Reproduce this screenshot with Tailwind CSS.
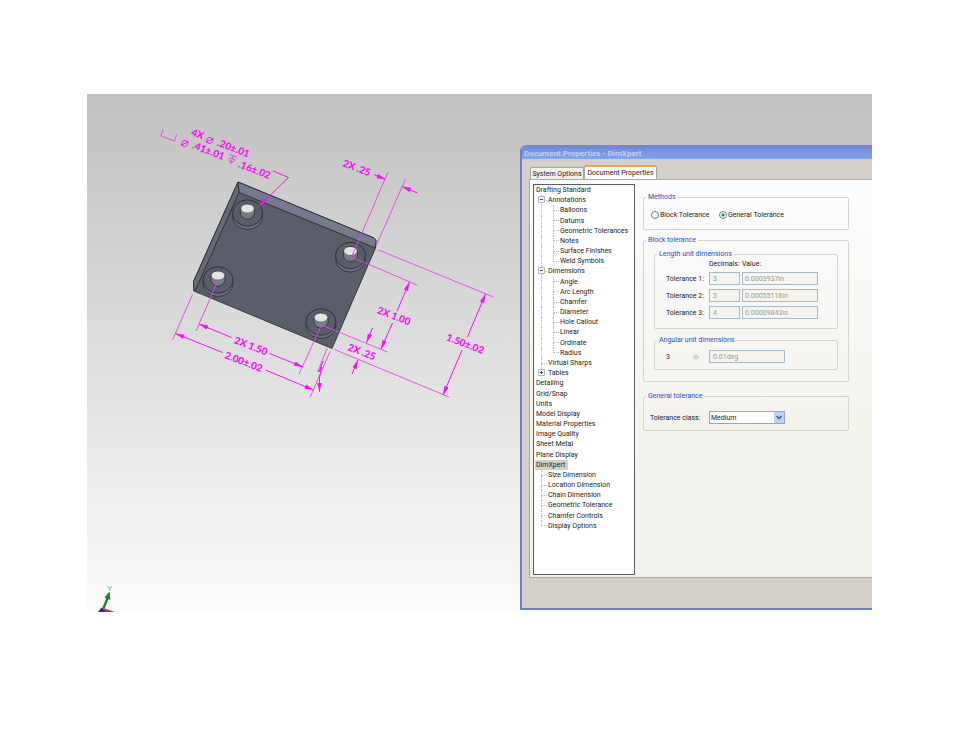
<!DOCTYPE html>
<html lang="en">
<head>
    <meta charset="UTF-8">
    <meta name="viewport" content="width=device-width, initial-scale=1.0">
    <title>Document Properties - DimXpert</title>
    <script src="https://cdn.jsdelivr.net/npm/@tailwindcss/browser@4"></script>
</head>
<body class="bg-white pt-[94px] pl-[87px] pr-[88px] pb-16 font-['Roboto',sans-serif] text-[7px] leading-[8px] text-[#222]">
    <main class="flex items-start overflow-hidden bg-linear-to-b from-[#c1c1c1] via-[#dedede] to-[#fcfcfc]">

        <!-- Model view -->
        <svg class="min-w-0 flex-1" viewBox="87 94 433 518" role="img" aria-label="Plate with dimensions">
            <defs>
                <marker id="arrow" viewBox="0 0 9 5" refX="9" refY="2.5" markerWidth="9" markerHeight="5" markerUnits="userSpaceOnUse" orient="auto-start-reverse">
                    <path d="M0 0.2 L9 2.5 L0 4.8 Z" fill="#f312f3"/>
                </marker>
                <g id="hole">
                    <ellipse cx="0" cy="3.5" rx="15" ry="13" fill="#6a6e7c" stroke="#2c2e36" stroke-width="0.8"/>
                    <ellipse cx="0" cy="0" rx="15" ry="13.2" fill="#5a5e6a" stroke="#2c2e36" stroke-width="0.9"/>
                    <ellipse cx="0" cy="-1.4" rx="7.3" ry="7.6" fill="#777a87" stroke="#2c2e36" stroke-width="0.8"/>
                    <ellipse cx="0" cy="-4.6" rx="6.4" ry="4" fill="#e4e4e0"/>
                </g>
            </defs>

            <!-- Plate -->
            <g stroke="#2c2e36" stroke-width="0.9" stroke-linejoin="round">
                <path d="M238 182 L374 238 L376 240 L375.500 248 L332 348.500 L194 291 L193.500 281.500 Z" fill="#5a5e6a"/>
                <path d="M238 182 L374 238 L376 240 L375.500 248 L239 192.500 Z" fill="#767a8d"/>
                <path d="M238 182 L239 192.500 L195.500 290 L194 291 L193.500 281.500 Z" fill="#666a78"/>
            </g>
            <use href="#hole" x="247.500" y="213"/>
            <use href="#hole" x="350.500" y="255.500"/>
            <use href="#hole" x="218" y="280"/>
            <use href="#hole" x="321" y="322"/>

            <!-- Extension lines -->
            <g fill="none" stroke="#f03cf0" stroke-width="0.9">
                <path d="M163 129 L161 136 L174.500 141 L176.500 134.500"/>
                <path d="M388 172 L351.500 257 L417 285"/>
                <path d="M405.500 179 L376.500 245"/>
                <path d="M378.500 250 L493.500 297"/>
                <path d="M387.500 352 L321.500 325 L299 374"/>
                <path d="M334.500 349.500 L449 397"/>
                <path d="M192.500 294.500 L172.500 340"/>
                <path d="M217.500 281.500 L196 331"/>
                <path d="M330 351.500 L310 397.500"/>
                <path d="M327 348.500 L317.500 372"/>
            </g>

            <!-- Dimension lines -->
            <g fill="none" stroke="#f312f3" stroke-width="1">
                <path marker-end="url(#arrow)" d="M273 171 L288.500 177.500 L259 206"/>
                <path marker-end="url(#arrow)" d="M374 174.500 L385.500 179.500"/>
                <path marker-end="url(#arrow)" d="M417.500 193 L402 186.500"/>
                <path marker-end="url(#arrow)" d="M397 311 L409.500 282"/>
                <path marker-end="url(#arrow)" d="M392.500 323 L381 349"/>
                <path marker-end="url(#arrow)" d="M372.500 328 L366.500 342.500"/>
                <path marker-end="url(#arrow)" d="M352 374 L358 360"/>
                <path marker-end="url(#arrow)" d="M467.500 337 L485.500 294"/>
                <path marker-end="url(#arrow)" d="M462 350 L443 395"/>
                <path marker-end="url(#arrow)" d="M231.500 337.500 L199 324"/>
                <path marker-end="url(#arrow)" d="M269.500 353.500 L303 367"/>
                <path marker-end="url(#arrow)" d="M222.500 352.500 L175.500 333.500"/>
                <path marker-end="url(#arrow)" d="M265.500 370 L313.500 390"/>
                <path marker-end="url(#arrow)" d="M323 361 L319 372 L321.500 367 L319.500 378 L319.500 392"/>
            </g>

            <!-- Depth symbol -->
            <g transform="translate(232 159.500) rotate(20)" fill="none" stroke="#f03cf0" stroke-width="0.9">
                <path d="M-4 -4 H4 M0 -4 V4 M-3 0 L0 4 L3 0 M-3 -1 H3"/>
            </g>

            <!-- Dimension values -->
            <g class="font-['Lato',sans-serif] text-[10px] font-black" fill="#f312f3">
                <text transform="translate(190.500 135) rotate(21)">4X</text>
                <text transform="translate(205 141.500) rotate(21)" class="font-['DejaVu_Sans',sans-serif] text-[13px] font-extralight">⌀</text>
                <text transform="translate(216.500 145.500) rotate(21)">.20±.01</text>
                <text transform="translate(180 144.500) rotate(21)" class="font-['DejaVu_Sans',sans-serif] text-[13px] font-extralight">⌀</text>
                <text transform="translate(191.500 148) rotate(21)">.41±.01</text>
                <text transform="translate(237.500 167) rotate(21)">.16±.02</text>
                <text transform="translate(342 166) rotate(21)">2X .25</text>
                <text transform="translate(376.500 313) rotate(21)">2X 1.00</text>
                <text transform="translate(347 350) rotate(21)">2X .25</text>
                <text transform="translate(445.500 340) rotate(21)">1.50±.02</text>
                <text transform="translate(233.500 343) rotate(21)">2X 1.50</text>
                <text transform="translate(224 358) rotate(21)">2.00±.02</text>
            </g>

            <!-- Axis triad -->
            <path d="M102 612 L108 597" stroke="#2c7a34" stroke-width="2.500"/>
            <path d="M109.500 591.500 L110.500 600 L104.500 597.500 Z" fill="#2c7a34"/>
            <path d="M103 608 L115 612 H102 Z" fill="#d0303a"/>
            <path d="M98 612 L101.500 607.500 L105 612 Z" fill="#2326b8"/>
            <text x="107" y="591" class="font-['Liberation_Sans',sans-serif] text-[8px]" fill="#6aa56c">Y</text>
        </svg>

        <!-- Dialog -->
        <section class="mt-[51px] mb-[3px] w-[352px] shrink-0 overflow-hidden rounded-tl-md border-b-2 border-l-2 border-[#6f80d3] bg-[#d4d0c8]">
            <h1 class="h-[14px] bg-linear-to-b from-[#6d86d8] via-[#7894e2] to-[#85a6ee] pt-[5px] pl-[2px] text-[8px] font-bold text-[#c3cff0]">Document Properties - DimXpert</h1>

            <div class="pt-[6px] pb-[30px] pl-[7px]">
                <div role="tablist" class="flex items-end pl-px">
                    <button role="tab" class="h-[12px] w-[54px] rounded-t-xs border border-b-0 border-[#a5a59c] bg-[#f1f0ea] text-center whitespace-nowrap">System Options</button>
                    <button role="tab" aria-selected="true" class="h-[14px] w-[73px] rounded-t-xs border border-t-2 border-b-0 border-[#a5a59c] border-t-[#f0a830] bg-[#fcfcfc] text-center whitespace-nowrap">Document Properties</button>
                </div>

                <div role="tabpanel" class="flex items-start border-y border-l border-[#aaa89f] bg-linear-to-b from-[#fcfcfe] via-[#f4f3ee] via-60% to-[#f2f1eb] pt-1 pb-[2px] pl-[3px]">

                    <div class="h-[391px] w-[102px] border border-[#5c5c5c] bg-white">
                        <ul id="tree" class="grid h-[346px] auto-rows-fr"></ul>
                    </div>

                    <form class="ml-2 w-[206px] pt-[9px]">
                        <fieldset class="rounded-xs border border-[#d5d4cb] pt-[9px] pb-[10px] pl-[7px]">
                            <legend class="-ml-[5px] px-[2px] text-[#2350c8]">Methods</legend>
                            <div class="flex h-[9px] items-center">
                                <input id="block" type="radio" name="method" class="size-[8px] appearance-none rounded-full border border-[#5d7f9f] bg-white checked:bg-[radial-gradient(#21a121_25%,#fff_50%)]">
                                <label for="block" class="w-[60px] pl-px whitespace-nowrap">Block Tolerance</label>
                                <input id="general" type="radio" name="method" checked class="size-[8px] appearance-none rounded-full border border-[#5d7f9f] bg-white checked:bg-[radial-gradient(#21a121_25%,#fff_50%)]">
                                <label for="general" class="pl-px whitespace-nowrap">General Tolerance</label>
                            </div>
                        </fieldset>

                        <fieldset class="mt-[6px] rounded-xs border border-[#d5d4cb] px-[10px] pt-[6px] pb-[11px]">
                            <legend class="-ml-[8px] px-[2px] text-[#2350c8]">Block tolerance</legend>

                            <fieldset class="rounded-xs border border-[#d5d4cb] pt-[2px] pb-[9px] pl-[11px]">
                                <legend class="-ml-[9px] px-[2px] text-[#2350c8]">Length unit dimensions</legend>
                                <div class="grid grid-cols-[41px_31px_76px] items-center gap-x-[2px] gap-y-1">
                                    <span></span>
                                    <span class="whitespace-nowrap">Decimals:</span>
                                    <span>Value:</span>

                                    <label for="tol1" class="whitespace-nowrap">Tolerance 1:</label>
                                    <input id="tol1" disabled value="3" class="h-[13px] w-full border border-[#a9b9c6] bg-[#f5f4ee] px-[3px] text-[#999]">
                                    <input aria-label="Tolerance 1 value" disabled value="0.0003937in" class="h-[13px] w-full border border-[#a9b9c6] bg-[#f5f4ee] px-[2px] text-[#999]">

                                    <label for="tol2" class="whitespace-nowrap">Tolerance 2:</label>
                                    <input id="tol2" disabled value="3" class="h-[13px] w-full border border-[#a9b9c6] bg-[#f5f4ee] px-[3px] text-[#999]">
                                    <input aria-label="Tolerance 2 value" disabled value="0.00055118in" class="h-[13px] w-full border border-[#a9b9c6] bg-[#f5f4ee] px-[2px] text-[#999]">

                                    <label for="tol3" class="whitespace-nowrap">Tolerance 3:</label>
                                    <input id="tol3" disabled value="4" class="h-[13px] w-full border border-[#a9b9c6] bg-[#f5f4ee] px-[3px] text-[#999]">
                                    <input aria-label="Tolerance 3 value" disabled value="0.00009843in" class="h-[13px] w-full border border-[#a9b9c6] bg-[#f5f4ee] px-[2px] text-[#999]">
                                </div>
                            </fieldset>

                            <fieldset class="mt-[7px] rounded-xs border border-[#d5d4cb] py-[6px] pl-[11px]">
                                <legend class="-ml-[9px] px-[2px] text-[#2350c8]">Angular unit dimensions</legend>
                                <div class="flex items-center">
                                    <label for="angle" class="w-[27px]">3</label>
                                    <svg class="mr-[10px] size-[6px]" viewBox="0 0 6 6" fill="none" stroke="#c4c3bb"><circle cx="3" cy="3" r="2"/><path d="M0 3 H6"/></svg>
                                    <input id="angle" disabled value="0.01deg" class="h-[13px] w-[76px] border border-[#a9b9c6] bg-[#f5f4ee] px-[3px] text-[#999]">
                                </div>
                            </fieldset>
                        </fieldset>

                        <fieldset class="mt-[10px] rounded-xs border border-[#d5d4cb] pt-[11px] pb-[6px] pl-[6px]">
                            <legend class="-ml-[4px] px-[2px] text-[#2350c8]">General tolerance</legend>
                            <div class="flex items-center">
                                <label for="class" class="w-[59px] whitespace-nowrap">Tolerance class:</label>
                                <div class="relative h-[13px] w-[76px]">
                                    <select id="class" class="block h-[13px] w-full appearance-none border border-[#8fa9c4] bg-white pl-px">
                                        <option>Medium</option>
                                    </select>
                                    <svg class="pointer-events-none absolute top-px right-px h-[11px] w-[10px] bg-[#bfd0f6]" viewBox="0 0 10 11" fill="none" stroke="#44597f" stroke-width="1.500"><path d="M2.500 4 L5 6.500 L7.500 4"/></svg>
                                </div>
                            </div>
                        </fieldset>
                    </form>
                </div>
            </div>
        </section>
    </main>

    <script>
        // [depth, label, flags]: "+" / "-" toggle, "last" ends its branch, "on" selected
        const rows = [
            [0, "Drafting Standard"],
            [1, "Annotations", "-"],
            [2, "Balloons"], [2, "Datums"], [2, "Geometric Tolerances"],
            [2, "Notes"], [2, "Surface Finishes"], [2, "Weld Symbols", "last"],
            [1, "Dimensions", "-"],
            [2, "Angle"], [2, "Arc Length"], [2, "Chamfer"], [2, "Diameter"],
            [2, "Hole Callout"], [2, "Linear"], [2, "Ordinate"], [2, "Radius", "last"],
            [1, "Virtual Sharps"],
            [1, "Tables", "+ last"],
            [0, "Detailing"], [0, "Grid/Snap"], [0, "Units"], [0, "Model Display"],
            [0, "Material Properties"], [0, "Image Quality"], [0, "Sheet Metal"],
            [0, "Plane Display"],
            [0, "DimXpert", "on"],
            [1, "Size Dimension"], [1, "Location Dimension"], [1, "Chain Dimension"],
            [1, "Geometric Tolerance"], [1, "Chamfer Controls"], [1, "Display Options", "last"]
        ];

        function branch(flags) {
            const tail = flags.includes("last") ? "flex-1" : "flex-1 border-l border-dotted border-[#bbb]";
            return `<span class="flex w-[6px] flex-col"><span class="flex-1 border-b border-l border-dotted border-[#bbb]"></span><span class="${tail}"></span></span>`;
        }

        function toggle(flags) {
            if (!/[+-]/.test(flags)) return "";
            const path = flags.includes("+") ? "M2 3.5 H5 M3.5 2 V5" : "M2 3.5 H5";
            return `<button aria-label="Toggle" class="absolute top-px left-[4px] size-[7px]"><svg class="block size-[7px]" viewBox="0 0 7 7" fill="#f4f4f0" stroke="#a9b7c4"><path d="M0.5 0.5 H6.5 V6.5 H0.5 Z"/><path stroke="#555" d="${path}"/></svg></button>`;
        }

        document.getElementById("tree").innerHTML = rows.map(([depth, label, flags = ""]) => {
            let lead = "";
            if (depth > 0) lead += `<span class="w-[7px]"></span>`;
            if (depth > 1) lead += `<span class="w-[12px] border-l border-dotted border-[#bbb]"></span>`;
            if (depth > 0) lead += branch(flags);
            const text = flags === "on"
                ? `<span class="ml-px bg-[#d4d0c8] pt-px pr-[3px] pl-px">${label}</span>`
                : `<span class="${depth ? "pl-px" : "pl-[2px]"} pt-px">${label}</span>`;
            return `<li class="relative flex items-stretch whitespace-nowrap">${lead}${toggle(flags)}${text}</li>`;
        }).join("");
    </script>
</body>
</html>
